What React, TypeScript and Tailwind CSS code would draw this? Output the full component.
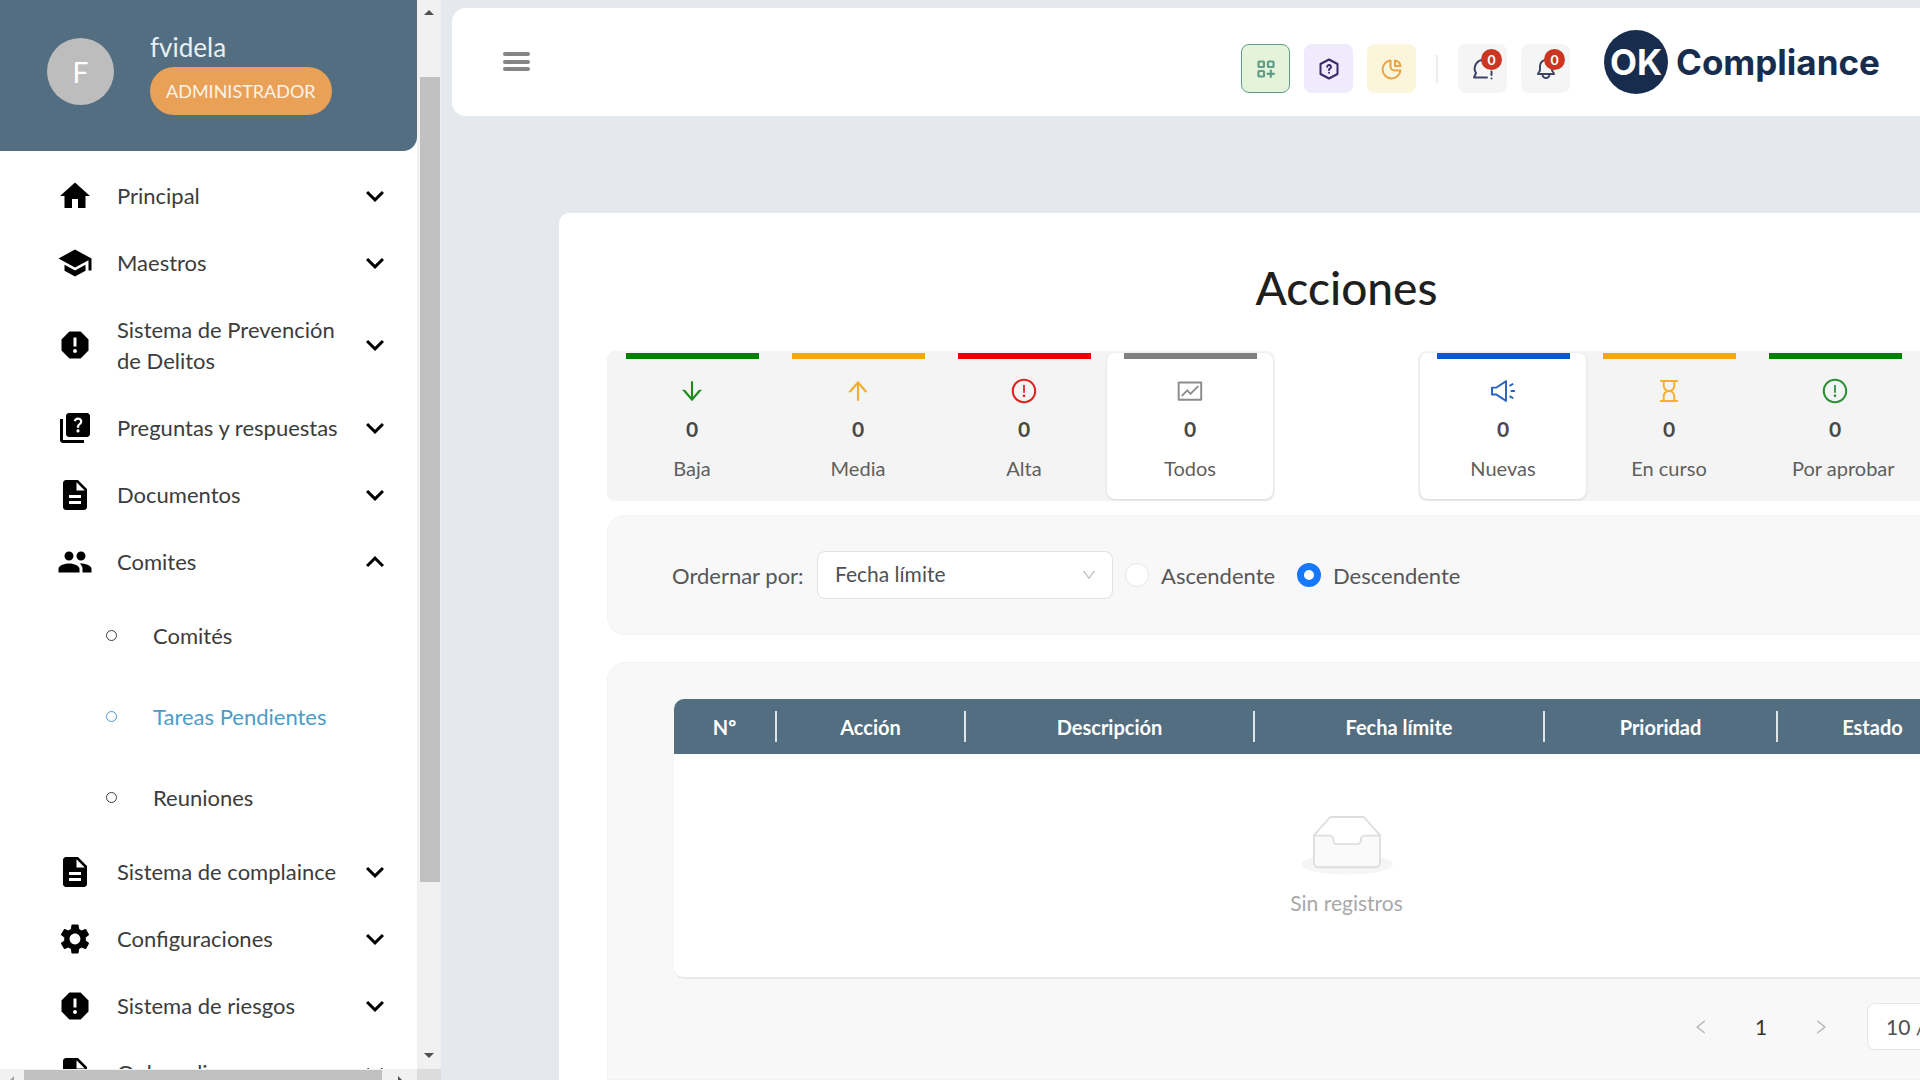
import type { ReactNode } from "react";
import type { IconType } from "react-icons";
import {
  MdDescription,
  MdExpandLess,
  MdExpandMore,
  MdGroup,
  MdHome,
  MdQuiz,
  MdReport,
  MdSchool,
  MdSettings,
  MdArrowDropUp,
  MdArrowDropDown,
  MdArrowLeft,
  MdArrowRight,
} from "react-icons/md";
import {
  AiOutlineArrowDown,
  AiOutlineArrowUp,
  AiOutlineDown,
  AiOutlineExclamationCircle,
  AiOutlineFund,
  AiOutlineHourglass,
  AiOutlineLeft,
  AiOutlineRight,
  AiOutlineSound,
} from "react-icons/ai";

type MenuEntry = {
  label: string;
  icon: IconType;
  children?: { label: string; active?: boolean }[];
};

const menu: MenuEntry[] = [
  { label: "Principal", icon: MdHome },
  { label: "Maestros", icon: MdSchool },
  { label: "Sistema de Prevención de Delitos", icon: MdReport },
  { label: "Preguntas y respuestas", icon: MdQuiz },
  { label: "Documentos", icon: MdDescription },
  {
    label: "Comites",
    icon: MdGroup,
    children: [{ label: "Comités" }, { label: "Tareas Pendientes", active: true }, { label: "Reuniones" }],
  },
  { label: "Sistema de complaince", icon: MdDescription },
  { label: "Configuraciones", icon: MdSettings },
  { label: "Sistema de riesgos", icon: MdReport },
  { label: "Onboarding", icon: MdDescription },
];

function MenuItem({ entry }: { entry: MenuEntry }) {
  const Icon = entry.icon;
  const Chevron = entry.children ? MdExpandLess : MdExpandMore;
  return (
    <li>
      <button type="button" className="flex w-full items-center py-[18px] pr-6 pl-[57px] text-left">
        <Icon className="-my-1 size-9 shrink-0 text-black" />
        <span className="ml-6 flex-1 pr-3 text-[22px] leading-[31px] text-[#3c3c3c]">{entry.label}</span>
        <Chevron className="-my-1 size-9 shrink-0 text-black" />
      </button>
      {entry.children && (
        <ul>
          {entry.children.map((child) => (
            <li key={child.label}>
              <a
                href="#"
                className={
                  child.active
                    ? "flex h-[81px] items-center pl-[106px] text-[22px] text-[#4a9cc9]"
                    : "flex h-[81px] items-center pl-[106px] text-[22px] text-[#3c3c3c]"
                }
              >
                <span className="size-[11px] rounded-full border border-current" />
                <span className="ml-9">{child.label}</span>
              </a>
            </li>
          ))}
        </ul>
      )}
    </li>
  );
}

function Sidebar() {
  return (
    <aside className="flex w-[441px] shrink-0 flex-col bg-white">
      <div className="flex min-h-0 flex-1">
        <div className="min-w-0 flex-1 overflow-hidden">
          <div className="flex h-[151px] items-start rounded-br-[14px] bg-[#526e80] pt-7 pl-[47px]">
            <div className="mt-2.5 flex size-[67px] items-center justify-center rounded-full bg-[#bdbdbd] text-[28px] text-white">
              F
            </div>
            <div className="ml-9 flex flex-col items-start">
              <span className="text-[26px] leading-[39px] text-[#e8f0f6]">fvidela</span>
              <span className="flex h-12 items-center rounded-full bg-[#e9a157] px-4 text-lg text-[#fdf3e7]">
                ADMINISTRADOR
              </span>
            </div>
          </div>
          <nav aria-label="Menú principal">
            <ul className="pt-[11px]">
              {menu.map((entry) => (
                <MenuItem key={entry.label} entry={entry} />
              ))}
            </ul>
          </nav>
        </div>
        <div className="flex w-6 shrink-0 flex-col items-center bg-[#f1f1f1] text-[#505050]">
          <div className="flex h-[77px] shrink-0 items-start pt-px">
            <MdArrowDropUp className="size-6" />
          </div>
          <div className="ml-0.5 w-5 basis-[805px] bg-[#c1c1c1]" />
          <div className="flex flex-1 items-end pb-0.5">
            <MdArrowDropDown className="size-6" />
          </div>
        </div>
      </div>
      <div className="flex h-[11px] shrink-0 items-start overflow-hidden bg-[#f1f1f1] text-[#505050]">
        <MdArrowLeft className="size-6 shrink-0 text-[#a3a3a3]" />
        <div className="mt-px h-5 w-[358px] bg-[#c1c1c1]" />
        <div className="flex h-5 flex-1 justify-center">
          <MdArrowRight className="size-6" />
        </div>
        <div className="h-5 w-6 bg-[#dcdcdc]" />
      </div>
    </aside>
  );
}

function LineIcon({ children }: { children: ReactNode }) {
  return (
    <svg
      viewBox="0 0 24 24"
      className="size-6"
      fill="none"
      stroke="currentColor"
      strokeWidth="2"
      strokeLinecap="round"
      strokeLinejoin="round"
      aria-hidden="true"
    >
      {children}
    </svg>
  );
}

function CountBadge() {
  return (
    <span className="absolute top-[5px] right-[5px] flex size-[21px] items-center justify-center rounded-full bg-[#cb3521] text-sm font-bold text-white">
      0
    </span>
  );
}

function TopBar() {
  return (
    <header className="ml-[11px] flex h-[108px] min-w-[1680px] items-start rounded-[14px] bg-white pl-[51px]">
      <button type="button" aria-label="Abrir menú" className="mt-11 flex h-[19px] w-[27px] flex-col justify-between">
        <span className="h-1 w-full rounded-sm bg-[#858585]" />
        <span className="h-1 w-full rounded-sm bg-[#858585]" />
        <span className="h-1 w-full rounded-sm bg-[#858585]" />
      </button>
      <div className="mt-9 ml-[711px] flex items-center gap-3.5">
        <button
          type="button"
          aria-label="Aplicaciones"
          className="flex size-[49px] items-center justify-center rounded-lg border border-[#5f9d89] bg-[#e4f3d9] text-[#5f9d89]"
        >
          <svg
            viewBox="0 0 24 24"
            className="size-6"
            fill="none"
            stroke="currentColor"
            strokeWidth="2.2"
            strokeLinecap="round"
            aria-hidden="true"
          >
            <rect x="4.500" y="4.500" width="5.500" height="5.500" rx="0.800" />
            <rect x="14" y="4.500" width="5.500" height="5.500" rx="0.800" />
            <rect x="4.500" y="14" width="5.500" height="5.500" rx="0.800" />
            <path d="M16.800 13.500v6.500M13.500 16.800h6.500" />
          </svg>
        </button>
        <button
          type="button"
          aria-label="Ayuda"
          className="flex size-[49px] items-center justify-center rounded-lg bg-[#efeafc] text-[#3a2a66]"
        >
          <LineIcon>
            <path d="M12 2.500 20.500 7v10L12 21.500 3.500 17V7z" />
            <path d="M10.200 9.800a1.900 1.900 0 1 1 2.800 1.700c-.7.4-1 .8-1 1.500M12 15.700v.1" />
          </LineIcon>
        </button>
        <button
          type="button"
          aria-label="Estadísticas"
          className="flex size-[49px] items-center justify-center rounded-lg bg-[#fbf5dc] text-[#eba441]"
        >
          <LineIcon>
            <path d="M10.500 3.500v6a4 4 0 0 0 4 4h6a9 9 0 1 1-10-10z" />
            <path d="M15 3.500v5.500h5.500A6.500 6.500 0 0 0 15 3.500z" />
          </LineIcon>
        </button>
        <span className="mx-1.5 h-7 w-0.5 bg-[#ececec]" />
        <button
          type="button"
          aria-label="Mensajes"
          className="relative flex size-[49px] items-center justify-center rounded-lg bg-[#f5f5f5] text-[#3d4466]"
        >
          <LineIcon>
            <path d="M12 3a8.500 8.500 0 0 0-7 13l-2 4.500h13" />
            <path d="M20.500 14.500v3.500M20.500 21.500v.1" />
          </LineIcon>
          <CountBadge />
        </button>
        <button
          type="button"
          aria-label="Notificaciones"
          className="relative flex size-[49px] items-center justify-center rounded-lg bg-[#f5f5f5] text-[#3d4466]"
        >
          <LineIcon>
            <path d="M12 3a6 6 0 0 0-6 6v4c0 1.500-2 2.500-2 4h16c0-1.500-2-2.500-2-4V9a6 6 0 0 0-6-6z" />
            <path d="M8.500 17.500a3.500 3.500 0 0 0 7 0" />
          </LineIcon>
          <CountBadge />
        </button>
      </div>
      <div className="mt-[22px] ml-[34px] flex items-center gap-2 font-['Inter',sans-serif] font-bold text-[#182d4e]">
        <span className="flex size-16 items-center justify-center rounded-full bg-[#182d4e] text-[35px] text-white">
          OK
        </span>
        <span className="text-[35px]">Compliance</span>
      </div>
    </header>
  );
}

type Tab = {
  label: string;
  icon: IconType;
  bar: string;
  color: string;
  selected?: boolean;
};

const priorityTabs: Tab[] = [
  { label: "Baja", icon: AiOutlineArrowDown, bar: "bg-[#008000]", color: "text-[#1c8a1c]" },
  { label: "Media", icon: AiOutlineArrowUp, bar: "bg-[#f7a80d]", color: "text-[#f5ad2a]" },
  { label: "Alta", icon: AiOutlineExclamationCircle, bar: "bg-[#ee0000]", color: "text-[#e32020]" },
  { label: "Todos", icon: AiOutlineFund, bar: "bg-[#808080]", color: "text-[#8c8c8c]", selected: true },
];

const statusTabs: Tab[] = [
  { label: "Nuevas", icon: AiOutlineSound, bar: "bg-[#0b57d0]", color: "text-[#2a63c4]", selected: true },
  { label: "En curso", icon: AiOutlineHourglass, bar: "bg-[#f7a80d]", color: "text-[#f5b030]" },
  { label: "Por aprobar", icon: AiOutlineExclamationCircle, bar: "bg-[#008000]", color: "text-[#2c8f35]" },
];

function TabGroup({ tabs, grow }: { tabs: Tab[]; grow?: boolean }) {
  return (
    <div className={grow ? "flex flex-1 rounded-lg bg-[#f4f4f4] p-0.5" : "flex shrink-0 rounded-lg bg-[#f4f4f4] p-0.5"}>
      {tabs.map((tab) => {
        const Icon = tab.icon;
        return (
          <button
            key={tab.label}
            type="button"
            className={
              tab.selected
                ? "flex h-[146px] w-[166px] flex-col items-center rounded-lg bg-white shadow-sm"
                : "flex h-[146px] w-[166px] flex-col items-center rounded-lg"
            }
          >
            <span className={`h-1.5 w-[133px] ${tab.bar}`} />
            <Icon className={`mt-[18px] size-7 ${tab.color}`} />
            <span className="mt-3 text-[21px] leading-6 font-bold text-[#484848]">0</span>
            <span className="mt-[15px] w-[86px] text-center text-xl leading-6 whitespace-nowrap text-[#5f5f5f]">
              {tab.label}
            </span>
          </button>
        );
      })}
    </div>
  );
}

function SortPanel() {
  return (
    <form className="mt-3.5 flex h-[120px] items-center rounded-[18px] border border-[#f3f3f3] bg-[#f8f8f8] pl-16 text-[22px] text-[#565656]">
      <label htmlFor="sort" className="w-[145px]">
        Ordernar por:
      </label>
      <div className="relative">
        <select
          id="sort"
          defaultValue="fecha"
          className="h-12 w-[296px] appearance-none rounded-lg border border-[#e2e2e2] bg-white pb-0.5 pl-[17px] text-[21px] text-[#505050]"
        >
          <option value="fecha">Fecha límite</option>
        </select>
        <AiOutlineDown className="pointer-events-none absolute top-4 right-4 size-4 text-[#bfbfbf]" />
      </div>
      <label className="ml-3 flex w-[172px] items-center gap-3">
        <input
          type="radio"
          name="direction"
          className="size-6 shrink-0 appearance-none rounded-full border border-[#e6e6e6] bg-white checked:border-[7px] checked:border-[#1677ff]"
        />
        Ascendente
      </label>
      <label className="flex items-center gap-3">
        <input
          type="radio"
          name="direction"
          defaultChecked
          className="size-6 shrink-0 appearance-none rounded-full border border-[#e6e6e6] bg-white checked:border-[7px] checked:border-[#1677ff]"
        />
        Descendente
      </label>
    </form>
  );
}

const columns = [
  { label: "Nº", width: "w-[103px]" },
  { label: "Acción", width: "w-[189px]" },
  { label: "Descripción", width: "w-[289px]" },
  { label: "Fecha límite", width: "w-[290px]" },
  { label: "Prioridad", width: "w-[233px]" },
  { label: "Estado", width: "w-[189px]" },
  { label: "", width: "" },
];

function EmptyBox() {
  return (
    <svg viewBox="0 0 64 41" className="h-[60px] w-[92px]" aria-hidden="true">
      <g transform="translate(0 1)" fill="none" fillRule="evenodd">
        <ellipse cx="32" cy="33" rx="32" ry="7" fill="#f5f5f5" />
        <g stroke="#dedede" strokeWidth="1.300">
          <path
            d="M55 12.760L44.854 1.258C44.367.474 43.656 0 42.907 0H21.093c-.749 0-1.460.474-1.947 1.257L9 12.761V22h46v-9.240z"
            fill="#fff"
          />
          <path
            d="M41.613 15.931c0-1.605.994-2.930 2.227-2.931H55v18.137C55 33.260 53.680 35 52.050 35h-40.100C10.320 35 9 33.259 9 31.137V13h11.160c1.233 0 2.227 1.323 2.227 2.928v.022c0 1.605 1.005 2.901 2.237 2.901h14.752c1.232 0 2.237-1.308 2.237-2.913v-.007z"
            fill="#fafafa"
          />
        </g>
      </g>
    </svg>
  );
}

function TablePanel() {
  return (
    <section className="mt-[27px] flex-1 rounded-t-[18px] border border-[#f3f3f3] bg-[#f8f8f8] px-[66px] pt-9">
      <div className="overflow-hidden rounded-[10px] border-b-2 border-[#e9e9e9] bg-white">
        <table className="w-full table-fixed">
          <thead>
            <tr className="h-[55px] bg-[#526e80] text-xl text-white">
              {columns.map((column, index) => (
                <th key={index} scope="col" className={`p-0 font-bold ${column.width}`}>
                  <div
                    className={
                      index < 5
                        ? "flex h-[31px] items-center justify-center border-r-2 border-[#dfe6ea]"
                        : "flex h-[31px] items-center justify-center"
                    }
                  >
                    {column.label}
                  </div>
                </th>
              ))}
            </tr>
          </thead>
          <tbody>
            <tr>
              <td colSpan={7} className="h-[223px] p-0">
                <div className="flex flex-col items-center gap-3 pt-0.5 text-[21px] leading-8 text-[#a8a8a8]">
                  <EmptyBox />
                  Sin registros
                </div>
              </td>
            </tr>
          </tbody>
        </table>
      </div>
      <nav aria-label="Paginación" className="mt-6 flex items-center justify-end text-[21px] text-[#505050]">
        <button type="button" aria-label="Página anterior" className="flex w-[60px] justify-center text-[#b8b8b8]">
          <AiOutlineLeft className="size-[18px]" />
        </button>
        <button type="button" aria-current="page" className="w-[60px] text-center text-[#333333]">
          1
        </button>
        <button type="button" aria-label="Página siguiente" className="flex w-[60px] justify-center text-[#b8b8b8]">
          <AiOutlineRight className="size-[18px]" />
        </button>
        <select
          aria-label="Registros por página"
          defaultValue="10"
          className="ml-4 h-[47px] w-[152px] appearance-none rounded-lg border border-[#e4e4e4] bg-white pl-[18px]"
        >
          <option value="10">10 / página</option>
        </select>
      </nav>
    </section>
  );
}

export default function App() {
  return (
    <div className="flex h-screen overflow-hidden bg-[#e5e8ec] font-['Lato','Open_Sans',sans-serif]">
      <Sidebar />
      <div className="flex min-w-0 flex-1 flex-col overflow-hidden pt-2">
        <TopBar />
        <main className="mt-[97px] ml-[118px] flex min-w-[1575px] flex-1 flex-col self-start rounded-tl-[10px] bg-white px-12 pt-[45px]">
          <h1 className="text-center text-[46px] leading-[60px] font-medium text-[#1f1f1f]">Acciones</h1>
          <div className="mt-[33px] flex gap-[143px]">
            <TabGroup tabs={priorityTabs} />
            <TabGroup tabs={statusTabs} grow />
          </div>
          <SortPanel />
          <TablePanel />
        </main>
      </div>
    </div>
  );
}
